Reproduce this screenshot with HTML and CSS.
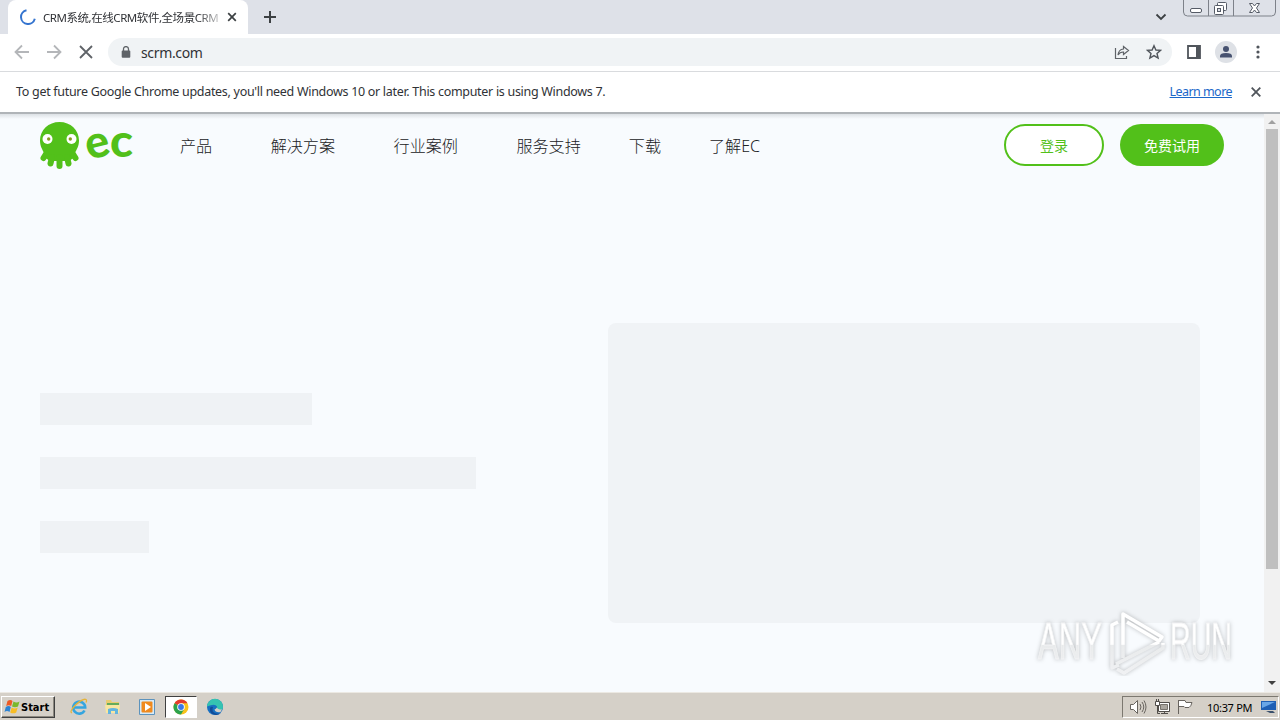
FILE: index.html
```html
<!DOCTYPE html>
<html lang="zh-CN">
<head>
    <meta charset="UTF-8">
    <meta name="viewport" content="width=device-width, initial-scale=1.0">
    <title>CRM系统,在线CRM软件,全场景CRM</title>
    <link rel="stylesheet" href="styles.css">
</head>
<body>
    <!-- Tabs -->
    <div class="tabstrip">
        <div class="tab">
            <svg class="spinner" width="16" height="16" viewBox="0 0 16 16"><path d="M6.500 1.200A7 7 0 1 0 14.800 9.800" fill="none" stroke="#3474cf" stroke-width="2"/></svg>
            <span class="tab-title">CRM系统,在线CRM软件,全场景CRM</span>
            <svg class="tab-close" width="10" height="10" viewBox="0 0 10 10"><path d="M1.200 1.200l7.600 7.600M8.800 1.200L1.200 8.800" stroke="#3c4043" stroke-width="1.700"/></svg>
        </div>
        <svg class="new-tab" width="12" height="12" viewBox="0 0 12 12"><path d="M6 0v12M0 6h12" stroke="#3c4043" stroke-width="2"/></svg>
        <svg class="chevron" width="12" height="8" viewBox="0 0 12 8"><path d="M1.500 1.500L6 6l4.500-4.500" fill="none" stroke="#3c4043" stroke-width="1.800"/></svg>
        <svg class="window-buttons" width="97" height="18" viewBox="0 0 97 18">
            <path d="M.5 0v12q0 4 4 4h84q4 0 4-4V0M25.500 0v16M50.500 0v16" fill="none" stroke="#7d8189"/>
            <rect x="7.500" y="8.500" width="11" height="4" rx="1.500" fill="#fff" stroke="#555b66"/>
            <rect x="34.500" y="2.500" width="9" height="8" rx="1" fill="#fff" stroke="#555b66"/>
            <rect x="31.500" y="5.500" width="9" height="9" rx="1" fill="#fff" stroke="#555b66"/>
            <rect x="34.500" y="8.500" width="3" height="3" fill="#dee1e8" stroke="#555b66"/>
            <path d="M66.500 3.500h3l2 2.500 2-2.500h3l-3 4.500 3 4.500h-3l-2-2.500-2 2.500h-3l3-4.500z" fill="#fff" stroke="#555b66"/>
        </svg>
    </div>

    <!-- Address bar -->
    <div class="toolbar">
        <svg width="16" height="16" viewBox="0 0 16 16"><path d="M15 8H2M8 1.500L1.500 8 8 14.500" fill="none" stroke="#b4b6b9" stroke-width="1.800"/></svg>
        <svg width="16" height="16" viewBox="0 0 16 16"><path d="M1 8h13M8 1.500L14.500 8 8 14.500" fill="none" stroke="#b4b6b9" stroke-width="1.800"/></svg>
        <svg width="16" height="16" viewBox="0 0 16 16"><path d="M2 2l12 12M14 2L2 14" stroke="#5f6368" stroke-width="1.800"/></svg>
        <div class="omnibox">
            <svg width="10" height="12" viewBox="0 0 10 12"><rect x=".7" y="4.500" width="8.600" height="7.200" rx="1" fill="#5f6368"/><path d="M2.500 5V3a2.500 2.400 0 0 1 5 0v2" fill="none" stroke="#5f6368" stroke-width="1.300"/></svg>
            <span class="url">scrm.com</span>
            <svg class="share" width="16" height="16" viewBox="0 0 16 16"><path d="M1.500 4v10.500h11V12M9.500 2.500L14.500 6.500l-5 4V8Q6 7.800 4 11q.5-5.500 5.500-6z" fill="none" stroke="#5f6368" stroke-width="1.200"/></svg>
            <svg width="16" height="16" viewBox="0 0 16 16"><path d="M8 1.700l1.900 4.300 4.700.4-3.600 3.100 1.100 4.600L8 11.600l-4.100 2.500L5 9.500 1.400 6.400l4.700-.4z" fill="none" stroke="#50555b" stroke-width="1.400"/></svg>
        </div>
        <svg class="side-panel" width="14" height="14" viewBox="0 0 14 14"><path d="M1 1h12v12H1z" fill="#fff" stroke="#50555b" stroke-width="1.800"/><path d="M9 1h4v12H9z" fill="#50555b"/></svg>
        <svg class="avatar" width="22" height="22" viewBox="0 0 22 22"><circle cx="11" cy="11" r="11" fill="#dee1e6"/><circle cx="11" cy="8" r="3" fill="#475270"/><path d="M5 16.500v-1.500q0-3 6-3t6 3v1.500z" fill="#475270"/></svg>
        <svg class="menu" width="4" height="14" viewBox="0 0 4 14" fill="#50555b"><circle cx="2" cy="2" r="1.600"/><circle cx="2" cy="7" r="1.600"/><circle cx="2" cy="12" r="1.600"/></svg>
    </div>

    <!-- Update notice -->
    <div class="infobar">
        <span class="notice">To get future Google Chrome updates, you'll need Windows 10 or later. This computer is using Windows 7.</span>
        <a class="learn-more" href="#">Learn more</a>
        <svg width="10" height="10" viewBox="0 0 10 10"><path d="M.7.700l8.600 8.600M9.300.7L.7 9.300" stroke="#50555b" stroke-width="1.800"/></svg>
    </div>

    <div class="viewport">
        <div class="page">
            <header class="header">
                <svg class="logo" width="96" height="50" viewBox="0 0 96 50">
                    <path d="M19.500 2C8.500 2 0 10 0 20.500c0 6 2.500 9 4 12.500v4l6 4h19l6-4v-4c1.500-3.500 4-6.500 4-12.500C39 10 30.500 2 19.500 2z" fill="#52c01a"/>
                    <path d="M6 34l-2.500 4M12 37l-1.500 6.500M19.500 37v9M27 37l1.500 6.500M33 34l2.500 4" fill="none" stroke="#52c01a" stroke-width="6" stroke-linecap="round"/>
                    <g fill="#fff"><circle cx="7.500" cy="19" r="5"/><circle cx="31.500" cy="19" r="5"/></g>
                    <g fill="#8a9a22"><circle cx="8.700" cy="19" r="1.700"/><circle cx="30.300" cy="19" r="1.700"/></g>
                    <text class="logo-text" x="45.500" y="37.500" textLength="24" lengthAdjust="spacingAndGlyphs" transform="rotate(-14 57 25)">e</text>
                    <text class="logo-text" x="70" y="36.500" textLength="23" lengthAdjust="spacingAndGlyphs">c</text>
                </svg>
                <nav class="nav">
                    <a>产品</a>
                    <a>解决方案</a>
                    <a>行业案例</a>
                    <a class="plain">服务支持</a>
                    <a class="plain">下载</a>
                    <a class="plain">了解EC</a>
                </nav>
                <button class="btn btn-outline">登录</button>
                <button class="btn btn-green">免费试用</button>
            </header>
            <main class="skeleton">
                <div class="lines">
                    <div class="line line-1"></div>
                    <div class="line line-2"></div>
                    <div class="line line-3"></div>
                </div>
                <div class="picture"></div>
            </main>
        </div>
        <div class="scrollbar">
            <svg width="8" height="4" viewBox="0 0 8 4"><path d="M0 4l4-4 4 4z" fill="#a0a0a0"/></svg>
            <div class="thumb"></div>
            <svg width="8" height="4" viewBox="0 0 8 4"><path d="M0 0l4 4 4-4z" fill="#404040"/></svg>
        </div>
        <svg class="watermark" width="212" height="70" viewBox="0 0 212 70">
            <defs>
                <linearGradient id="fade" gradientUnits="userSpaceOnUse" x1="0" y1="5" x2="0" y2="68">
                    <stop offset="0" stop-color="#fff"/>
                    <stop offset=".53" stop-color="#fff"/>
                    <stop offset=".54" stop-color="#e9ebec"/>
                    <stop offset="1" stop-color="#f0f1f3"/>
                </linearGradient>
            </defs>
            <g class="mark">
                <text x="6" y="53" textLength="64" lengthAdjust="spacingAndGlyphs">ANY</text>
                <text x="138" y="53" textLength="62" lengthAdjust="spacingAndGlyphs">RUN</text>
                <g fill="none" stroke="url(#fade)" stroke-width="3.500" stroke-linejoin="round">
                    <path d="M86 16l-6 3v43l7-3"/>
                    <path d="M91 52V8l39 23-3 4-32-19"/>
                    <path d="M85 63l7 4 39-25v-5M84 58l43-22"/>
                </g>
            </g>
        </svg>
    </div>

    <!-- Taskbar -->
    <div class="taskbar">
        <div class="start">
            <svg width="17" height="16" viewBox="0 0 17 16">
                <path d="M3.500 2q3-2 5 0L7.200 7q-2.500-1.500-5 0z" fill="#ee5a24"/>
                <path d="M9.500 2.500q3 1.800 6 0L14 7.500q-3 1.500-6 0z" fill="#79b82b"/>
                <path d="M1.800 8q3-1.800 5 0L5.500 13q-2.500-1.800-5 0z" fill="#2c83d3"/>
                <path d="M7.700 8.500q3 1.800 6 0l-1.500 5q-3 1.700-6 0z" fill="#f8bd25"/>
            </svg>
            <span>Start</span>
        </div>
        <div class="apps">
            <div class="app">
                <svg width="18" height="18" viewBox="0 0 18 18"><path d="M14.500 12.500a6 6 0 1 1 .7-3H4" fill="none" stroke="#35a5df" stroke-width="2.600"/><path d="M2 15Q-1 14 5 7.500 13 0 16 1.500q1 .8 0 3" fill="none" stroke="#e5b43a" stroke-width="1.300"/></svg>
            </div>
            <div class="app">
                <svg width="18" height="18" viewBox="0 0 18 18"><path d="M2 2h5l1 2h7v11H2z" fill="#e8cc70"/><path d="M3 5h12v3H3z" fill="#65ab5b"/><path d="M1 7h15l-1 8H2z" fill="#f8e6a0"/><path d="M4 16v-5q5-2 10 0v5h-3v-3H7v3z" fill="#63b5df"/></svg>
            </div>
            <div class="app">
                <svg width="18" height="18" viewBox="0 0 18 18"><path d="M1.500 1.500h15v15h-15z" fill="#d7eaf7" stroke="#5c93bd"/><rect x="3.500" y="3.500" width="11" height="11" rx="1" fill="#f08a1e"/><path d="M7 5v8l6-4z" fill="#fff"/></svg>
            </div>
            <div class="app active">
                <svg width="16" height="16" viewBox="0 0 16 16"><circle cx="8" cy="8" r="7.500" fill="#f9c21b"/><path d="M8 8L1.500 4.250A7.500 7.500 0 0 1 14.500 4.250H8z" fill="#e33b2e"/><path d="M8 8L1.500 4.250A7.500 7.500 0 0 0 8 15.500L11.200 10z" fill="#2ba24c"/><circle cx="8" cy="8" r="3.800" fill="#fff"/><circle cx="8" cy="8" r="2.900" fill="#3b78e7"/></svg>
            </div>
            <div class="app">
                <svg width="18" height="18" viewBox="0 0 18 18"><circle cx="9" cy="9" r="8" fill="#176fc1"/><path d="M1 8.500A8 8 0 0 1 17 9q0 3.500-4.500 3.500-2.500 0-2-1.500 1-1 .5-2.500Q9 5 1 8.500z" fill="#35c3b1"/><path d="M7 9q-2 5 3 6.500 2.500.7 5-.5-2 2-5 2Q3 16 4 10q1-2 3-1z" fill="#124c98"/><path d="M11 9.500q.5 2 5 2l-1.500 2.500q-5 1-6-2.500 1.500-.3 2.500-2z" fill="#d5d0c8"/></svg>
            </div>
        </div>
        <div class="tray">
            <svg width="18" height="16" viewBox="0 0 18 16" fill="none" stroke="#68645f"><path d="M1.500 5.500h3l4-4v13l-4-4h-3z" fill="#fff"/><path d="M11 5q2 3 0 6M13 3q3.500 5 0 10M15 1.500q4 6.500 0 13"/></svg>
            <svg width="16" height="16" viewBox="0 0 16 16" fill="none" stroke="#504d49"><path d="M4.500 3.500h11v9h-11z" fill="#fff"/><path d="M6.500 5.500h7v5h-7z" fill="#aaa69f" stroke="#77736d"/><path d="M7 14.500h7M10.500 13v1"/><path d="M2.500 0v3M4.500 0v3M3.500 7v7.500H6"/><path d="M1.500 2.500h4v4h-4z" fill="#fff"/></svg>
            <svg width="16" height="16" viewBox="0 0 16 16"><path d="M1.500 1v14M2 1.500h6l1 2h6q-1 4-3 5H8L7 7.500H2" fill="#fff" stroke="#68645f"/></svg>
            <span class="clock">10:37 PM</span>
            <svg width="16" height="14" viewBox="0 0 16 14"><path d="M0 1h15v9H0z" fill="#1f5fb4"/><path d="M1 2h13L1 8z" fill="#69a6e7"/><path d="M5 11h7l2 2H9z" fill="#3a506c"/></svg>
        </div>
    </div>
</body>
</html>
```
FILE: styles.css
```css
* {
    box-sizing: border-box;
}
body {
    margin: 0;
    width: 1280px;
    height: 720px;
    overflow: hidden;
    display: flex;
    flex-direction: column;
    font-family: "Noto Sans", "Noto Sans CJK SC", sans-serif;
    color: #303236;
    background-color: white;
}
svg {
    display: block;
    flex-shrink: 0;
}
.tabstrip {
    display: flex;
    height: 34px;
    flex-shrink: 0;
    padding-left: 8px;
    background-color: #dee1e8;
}
.tab {
    display: flex;
    align-items: center;
    width: 240px;
    padding: 0 11px 0 12px;
    border-radius: 8px 8px 0 0;
    background-color: white;
}
.tab-title {
    width: 175px;
    margin: 0 9px 0 7px;
    white-space: nowrap;
    font-size: 11.5px;
    letter-spacing: -0.45px;
    -webkit-mask-image: linear-gradient(to right, black 88%, rgba(0, 0, 0, 0.3));
    mask-image: linear-gradient(to right, black 88%, rgba(0, 0, 0, 0.3));
}
.new-tab {
    margin: 11px 0 0 16px;
}
.chevron {
    margin: 13px 16px 0 auto;
}
.toolbar {
    display: flex;
    align-items: center;
    height: 38px;
    flex-shrink: 0;
    padding: 0 20px 1px 14px;
    gap: 16px;
    border-bottom: 1px solid #d9dbde;
}
.omnibox {
    display: flex;
    align-items: center;
    width: 1064px;
    height: 28px;
    margin-left: -2px;
    padding: 0 10px 0 13px;
    border-radius: 14px;
    background-color: #f0f3f5;
}
.url {
    margin-left: 10px;
    font-size: 14px;
    letter-spacing: -0.35px;
}
.share {
    margin: 0 16px 0 auto;
}
.side-panel {
    margin-left: -1px;
}
.avatar {
    margin-left: -2px;
}
.menu {
    margin-left: 3px;
}
.infobar {
    display: flex;
    align-items: center;
    height: 40px;
    flex-shrink: 0;
    padding: 0 19px 1px 16px;
    font-size: 12.5px;
}
.notice {
    white-space: nowrap;
    letter-spacing: -0.3px;
}
.learn-more {
    margin: 0 19px 0 auto;
    letter-spacing: -0.55px;
    color: #1b67c9;
}
.viewport {
    position: relative;
    display: flex;
    height: 580px;
    flex-shrink: 0;
    border-top: 2px solid #b0b4b8;
}
.page {
    width: 1264px;
    padding: 0 40px;
    background: linear-gradient(#dde1e5, #f8fbfe 5px);
}
.header {
    display: flex;
    align-items: center;
    height: 62px;
}
.logo-text {
    font-family: Lato, sans-serif;
    font-size: 45px;
    font-weight: 900;
    fill: #52c01a;
}
.nav {
    display: flex;
    margin-left: 44px;
    font-size: 16.1px;
    font-weight: 300;
    color: #202124;
}
.nav a {
    margin-right: 58.5px;
    white-space: nowrap;
}
.nav .plain {
    margin-right: 48px;
}
.btn {
    width: 104px;
    height: 42px;
    padding: 0;
    border: none;
    border-radius: 21px;
    font-family: "Noto Sans CJK SC", sans-serif;
    font-size: 14px;
    color: white;
    background-color: #52c01a;
}
.btn-outline {
    width: 100px;
    margin: 0 16px 0 auto;
    border: 2px solid #52c01a;
    color: #52c01a;
    background-color: white;
}
.skeleton {
    display: flex;
    justify-content: space-between;
    align-items: center;
    padding: 147px 24px 0 0;
}
.lines {
    display: flex;
    flex-direction: column;
    gap: 32px;
}
.line {
    height: 32px;
    background-color: #eff2f5;
}
.line-1 {
    width: 272px;
}
.line-2 {
    width: 436px;
}
.line-3 {
    width: 109px;
}
.picture {
    width: 592px;
    height: 300px;
    border-radius: 8px;
    background-color: #f0f3f6;
}
.scrollbar {
    display: flex;
    flex-direction: column;
    align-items: center;
    width: 16px;
    padding: 6px 0 7px;
    background-color: #f1f1f1;
}
.thumb {
    width: 12px;
    height: 440px;
    margin: 5px 0 auto;
    background-color: #bfbfbf;
}
.watermark {
    position: absolute;
    left: 1032px;
    top: 492px;
}
.mark {
    fill: url(#fade);
    stroke: #f2f3f4;
    stroke-width: 0.8px;
    font-family: "Liberation Sans", sans-serif;
    font-size: 51px;
    filter: drop-shadow(0 0 2px rgba(0, 0, 0, 0.25));
}
.taskbar {
    display: flex;
    align-items: center;
    height: 28px;
    padding: 1px 1px 0 1px;
    border-top: 1px solid #ece9e3;
    background-color: #d5d0c8;
}
.start {
    display: flex;
    align-items: center;
    width: 54px;
    height: 22px;
    padding-left: 2px;
    border: 1px solid;
    border-color: white #404040 #404040 white;
    box-shadow: inset -1px -1px #8c8880;
    font-family: "DejaVu Sans Condensed", "DejaVu Sans", sans-serif;
    font-size: 11px;
    font-weight: bold;
    color: black;
}
.apps {
    display: flex;
    gap: 2px;
    margin-left: 8px;
}
.app {
    display: flex;
    align-items: center;
    justify-content: center;
    width: 32px;
    height: 22px;
}
.app.active {
    border: 1px solid;
    border-color: #404040 white white #404040;
    background-color: white;
}
.tray {
    display: flex;
    align-items: center;
    gap: 7px;
    width: 157px;
    height: 22px;
    margin-left: auto;
    padding-left: 6px;
    border: 1px solid;
    border-color: #7c7870 white white #7c7870;
}
.clock {
    width: 46px;
    margin: 0 1px 0 7px;
    white-space: nowrap;
    font-size: 11px;
    letter-spacing: -0.3px;
    color: black;
}
```
